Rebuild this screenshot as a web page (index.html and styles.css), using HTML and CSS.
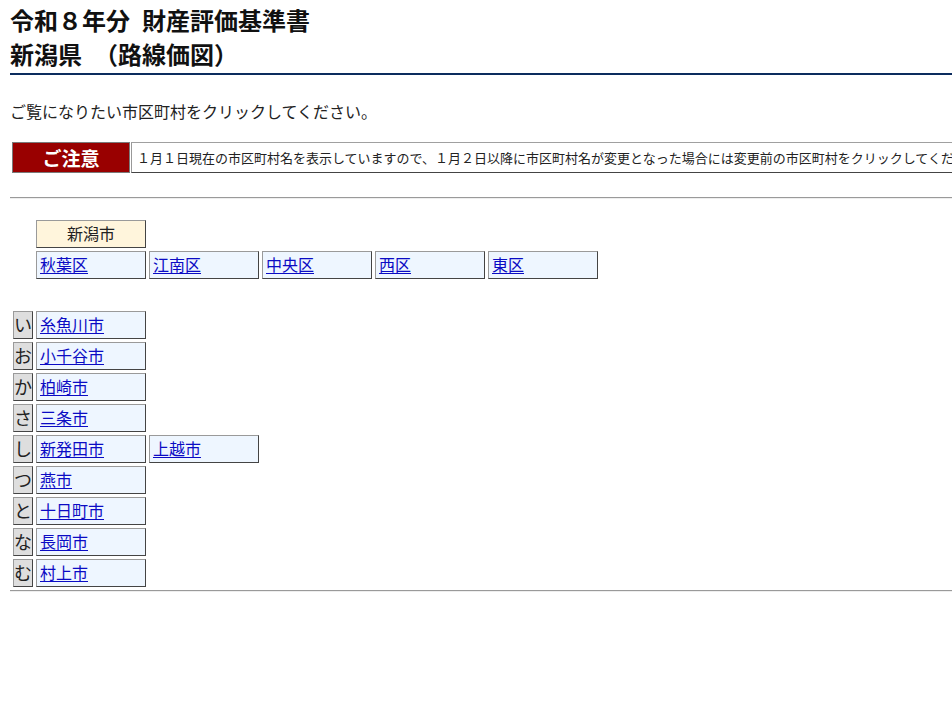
FILE: index.html
```html
<!DOCTYPE html>
<html lang="ja">
<head>
<meta charset="utf-8">
<title>新潟県 路線価図</title>
<link rel="stylesheet" href="styles.css">
</head>
<body>
<h1 class="title">令和８年分<span class="title-gap"> </span>財産評価基準書<br>新潟県　（路線価図）</h1>
<p class="lead">ご覧になりたい市区町村をクリックしてください。</p>
<div class="notice">
  <div class="notice-label">ご注意</div>
  <div class="notice-text">１月１日現在の市区町村名を表示していますので、１月２日以降に市区町村名が変更となった場合には変更前の市区町村をクリックしてください。</div>
</div>
<hr class="rule">
<div class="city">
  <div class="city-head">新潟市</div>
  <div class="cells">
    <a class="cell" href="#">秋葉区</a>
    <a class="cell" href="#">江南区</a>
    <a class="cell" href="#">中央区</a>
    <a class="cell" href="#">西区</a>
    <a class="cell" href="#">東区</a>
  </div>
</div>
<div class="kana-list">
  <div class="kana-row"><span class="kana">い</span><a class="cell" href="#">糸魚川市</a></div>
  <div class="kana-row"><span class="kana">お</span><a class="cell" href="#">小千谷市</a></div>
  <div class="kana-row"><span class="kana">か</span><a class="cell" href="#">柏崎市</a></div>
  <div class="kana-row"><span class="kana">さ</span><a class="cell" href="#">三条市</a></div>
  <div class="kana-row"><span class="kana">し</span><a class="cell" href="#">新発田市</a><a class="cell" href="#">上越市</a></div>
  <div class="kana-row"><span class="kana">つ</span><a class="cell" href="#">燕市</a></div>
  <div class="kana-row"><span class="kana">と</span><a class="cell" href="#">十日町市</a></div>
  <div class="kana-row"><span class="kana">な</span><a class="cell" href="#">長岡市</a></div>
  <div class="kana-row"><span class="kana">む</span><a class="cell" href="#">村上市</a></div>
</div>
<hr class="rule rule-bottom">
</body>
</html>
```

FILE: styles.css
```css
html {
  overflow-x: hidden;
}
body {
  margin: 0 0 0 10px;
  font-family: "Noto Sans CJK JP", "Noto Sans", sans-serif;
  color: #222;
  background: #fff;
}
.title {
  margin: 3px 0 0;
  padding: 0 0 2px;
  font-size: 24px;
  line-height: 34px;
  font-weight: bold;
  color: #111;
  border-bottom: 2px solid #0c2c5e;
  white-space: nowrap;
}
.title-gap {
  display: inline-block;
  width: 12px;
}
.lead {
  margin: 24px 0 0;
  font-size: 16px;
  line-height: 24px;
}
.notice {
  display: flex;
  gap: 1px;
  margin: 19px 0 0 2px;
  white-space: nowrap;
}
.notice-label {
  flex: none;
  width: 116px;
  height: 29px;
  border: 1px solid #7a7a7a;
  background: #990000;
  color: #fff;
  font-weight: bold;
  font-size: 19px;
  line-height: 29px;
  text-align: center;
}
.notice-text {
  flex: none;
  height: 29px;
  padding: 0 5px;
  border: 1px solid;
  border-color: #a0a0a0 #444 #444 #999;
  font-size: 13px;
  line-height: 29px;
  color: #222;
}
.rule {
  margin: 24px 0 0;
  border: 0;
  border-top: 1px solid #9a9a9a;
  border-bottom: 1px solid #eee;
  height: 0;
}
.city {
  margin: 21px 0 0 26px;
}
.city-head,
.cell,
.kana {
  box-sizing: border-box;
  height: 28px;
  border: 1px solid;
  border-color: #9a9a9a #444 #444 #9a9a9a;
  font-size: 16px;
  line-height: 25px;
}
.city-head {
  width: 110px;
  background: #fff5dc;
  text-align: center;
  color: #222;
}
.cells {
  display: flex;
  gap: 3px;
  margin-top: 3px;
}
.cell {
  display: block;
  flex: none;
  width: 110px;
  padding: 0 3px;
  background: #eef6ff;
  color: #0b0bc4;
  text-decoration: underline;
  text-underline-offset: 2px;
}
.kana-list {
  display: flex;
  flex-direction: column;
  gap: 3px;
  margin: 32px 0 0 3px;
}
.kana-row {
  display: flex;
  gap: 3px;
}
.kana {
  flex: none;
  width: 20px;
  background: #dedede;
  text-align: center;
  color: #222;
  font-size: 18px;
  overflow: hidden;
}
.rule-bottom {
  margin-top: 3px;
}
```
